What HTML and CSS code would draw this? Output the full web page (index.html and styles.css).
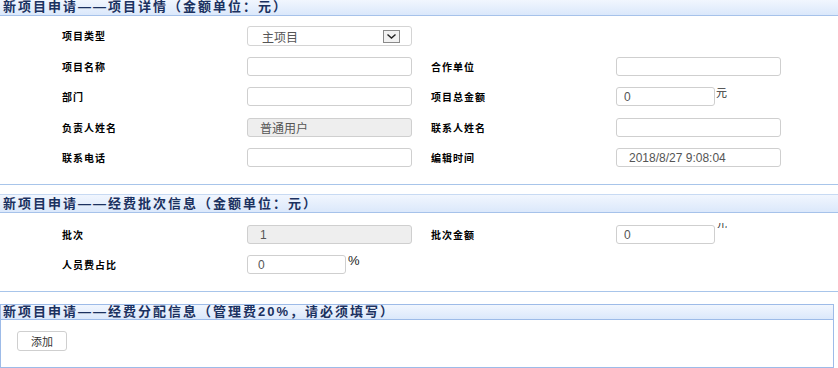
FILE: index.html
```html
<!DOCTYPE html>
<html lang="zh-CN">
    <head>
        <meta charset="UTF-8">
        <meta name="viewport" content="width=device-width, initial-scale=1.0">
        <title>新项目申请</title>
        <link rel="stylesheet" href="styles.css">
    </head>

    <body>
        <div class="section">
            <div class="hd first">新项目申请——项目详情（金额单位：元）</div>
            <div class="form">
                <label>项目类型</label>
                <div class="select">
                    <span>主项目</span>
                    <span class="arrow">
                        <svg width="11" height="7" viewBox="0 0 11 7"><path d="M1.5 1.5 L5.5 5 L9.5 1.5" fill="none" stroke="#222" stroke-width="1.4"/></svg>
                    </span>
                </div>
                <span></span>
                <span></span>

                <label>项目名称</label>
                <input type="text">
                <label>合作单位</label>
                <input type="text">

                <label>部门</label>
                <input type="text">
                <label>项目总金额</label>
                <div class="cell">
                    <input type="text" class="short num" value="0">
                    <span class="unit">元</span>
                </div>

                <label>负责人姓名</label>
                <input type="text" class="ro" value="普通用户" readonly>
                <label>联系人姓名</label>
                <input type="text">

                <label>联系电话</label>
                <input type="text">
                <label>编辑时间</label>
                <input type="text" value="2018/8/27 9:08:04">
            </div>
        </div>

        <div class="section second">
            <div class="hd">新项目申请——经费批次信息（金额单位：元）</div>
            <div class="form">
                <label>批次</label>
                <input type="text" class="ro" value="1" readonly>
                <label>批次金额</label>
                <div class="cell">
                    <input type="text" class="short num" value="0">
                    <span class="unit cut"><span>元</span></span>
                </div>

                <label>人员费占比</label>
                <div class="cell">
                    <input type="text" class="short" value="0">
                    <span class="pct">%</span>
                </div>
            </div>
        </div>

        <div class="box">
            <div class="hd">新项目申请——经费分配信息（管理费20%，请必须填写）</div>
            <div class="box-body">
                <button>添加</button>
            </div>
        </div>
    </body>
</html>
```

FILE: styles.css
```css
body{
    margin: 0;
    background: #fff;
    font-family: "Liberation Sans", "Noto Sans CJK SC", sans-serif;
    color: #000;
}

.hd{
    height: 17px;
    line-height: 17px;
    padding-left: 3px;
    background: linear-gradient(#f1f6fe, #dbe8fb);
    border-top: 1px solid #c8daf3;
    border-bottom: 1px solid #a6c2ea;
    color: #1b3160;
    font-size: 13px;
    font-weight: bold;
    letter-spacing: 2px;
    white-space: nowrap;
    overflow: hidden;
}

.hd.first{
    height: 15px;
    line-height: 14px;
    border-top: none;
}

.section{
    border-bottom: 1px solid #a8c5ea;
}

.section.second{
    margin-top: 9px;
}

.form{
    display: grid;
    grid-template-columns: 185px 184px 185px 1fr;
    grid-auto-rows: 19px;
    row-gap: 11.5px;
    align-items: center;
    padding: 10px 0 17px 62px;
}

.second .form{
    row-gap: 11px;
    padding-top: 12px;
    padding-bottom: 17px;
}

label{
    font-family: "Noto Sans CJK SC", sans-serif;
    font-size: 10px;
    font-weight: bold;
    letter-spacing: 1px;
    line-height: 19px;
}

input{
    box-sizing: border-box;
    width: 165px;
    height: 19px;
    margin: 0;
    padding: 0 0 0 12px;
    border: 1px solid #cfcfcf;
    border-radius: 3px;
    background: #fff;
    font-family: "Liberation Sans", "Noto Sans CJK SC", sans-serif;
    font-size: 12px;
    color: #555;
    outline: none;
}

input.short{
    width: 99px;
    padding-left: 10px;
}

input.num{
    padding-left: 7px;
}

input.ro{
    background: #eeeeee;
}

.cell{
    display: flex;
    align-items: flex-start;
    height: 19px;
}

.unit{
    font-family: "Noto Sans CJK SC", sans-serif;
    font-size: 11px;
    line-height: 11px;
    color: #333;
    margin-left: 1px;
}

.unit.cut{
    display: block;
    height: 5px;
    margin-top: -2px;
    overflow: hidden;
}

.unit.cut span{
    display: block;
    margin-top: -5px;
}

.pct{
    font-size: 13px;
    line-height: 12px;
    margin-left: 2px;
    color: #222;
}

.select{
    box-sizing: border-box;
    width: 165px;
    height: 20px;
    margin-top: 1px;
    display: flex;
    align-items: center;
    justify-content: space-between;
    padding: 0 11px 0 14px;
    border: 1px solid #d4d4d4;
    border-radius: 3px;
    font-family: "Noto Sans CJK SC", sans-serif;
    font-size: 12px;
    color: #555;
}

.arrow{
    box-sizing: border-box;
    width: 17px;
    height: 13px;
    display: flex;
    align-items: center;
    justify-content: center;
    border: 1px solid #8a8a8a;
    background: #f2f2f2;
}

.box{
    width: 834px;
    box-sizing: border-box;
    margin-top: 12px;
    border: 1px solid #9dbbe8;
}

.box .hd{
    height: 14px;
    line-height: 14px;
    padding-left: 2px;
    border-top: none;
    border-bottom: 1px solid #9dbbe8;
}

.box-body{
    padding: 11px 16px 16px;
}

button{
    box-sizing: border-box;
    width: 50px;
    height: 20px;
    display: block;
    border: 1px solid #cfcfcf;
    border-radius: 3px;
    background: #fff;
    font-family: "Noto Sans CJK SC", sans-serif;
    font-size: 11px;
    color: #333;
    cursor: pointer;
}
```
